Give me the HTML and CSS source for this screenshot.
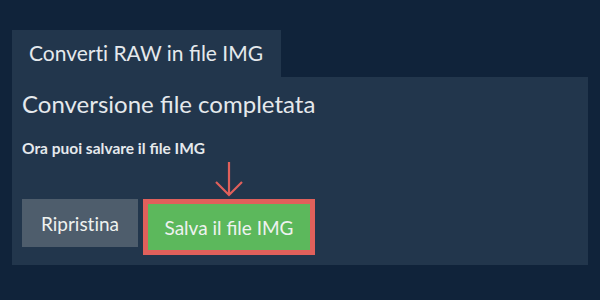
FILE: index.html
```html
<!DOCTYPE html>
<html lang="it">
<head>
  <meta charset="UTF-8">
  <meta name="viewport" content="width=device-width, initial-scale=1.0">
  <title>Converti RAW in file IMG</title>
  <link rel="stylesheet" href="styles.css">
</head>
<body>

<div id="converter">
  <div class="tab">Convert&zwnj;i RAW in file IMG</div>
  <div class="panel">
    <h2>Conversione file completata</h2>
    <p class="hint">Ora puoi salvare il file IMG</p>
    <div class="actions">
      <button class="btn reset">Riprist&zwnj;ina</button>
      <div class="save-wrap">
        <!-- arrow pointing at the save button -->
        <svg class="arrow" width="30" height="36" viewBox="0 0 30 36">
          <path d="M15 1 V34 M2 21 L15 34 L28 21" fill="none" stroke="#e0605b" stroke-width="2.2"/>
        </svg>
        <button class="btn save">Salva il file IMG</button>
      </div>
    </div>
  </div>
</div>

</body>
</html>
```

FILE: styles.css
```css
body {
  font-family: Lato, 'Open Sans', sans-serif;
  background-color: #10233a;
  color: #e5e9ec;
  margin: 0;
}

#converter {
  padding: 30px 12px 34px;
}

.tab {
  display: inline-block;
  background-color: #22364c;
  font-size: 21px;
  line-height: 46px;
  padding: 0 18px 0 17px;
  height: 47px;
}

.panel {
  background-color: #22364c;
  padding: 12px 10px 10px;
}

.panel h2 {
  font-size: 24px;
  font-weight: normal;
  margin: 0;
  line-height: 30px;
}

.hint {
  font-size: 15.5px;
  font-weight: bold;
  margin: 20px 0 0;
}

.actions {
  display: flex;
  align-items: flex-start;
  gap: 5px;
  margin-top: 42px;
}

.btn {
  font-family: Lato, 'Open Sans', sans-serif;
  font-size: 19px;
  color: #eef2f0;
  border: none;
  cursor: pointer;
}

.reset {
  background-color: #4e5d6c;
  width: 116px;
  height: 48px;
}

.save-wrap {
  position: relative;
  display: flex;
}

.save {
  background-color: #5cb85c;
  border: 5px solid #e0605b;
  width: 172px;
  height: 56px;
}

.arrow {
  position: absolute;
  left: 71px;
  top: -38px;
}
```
